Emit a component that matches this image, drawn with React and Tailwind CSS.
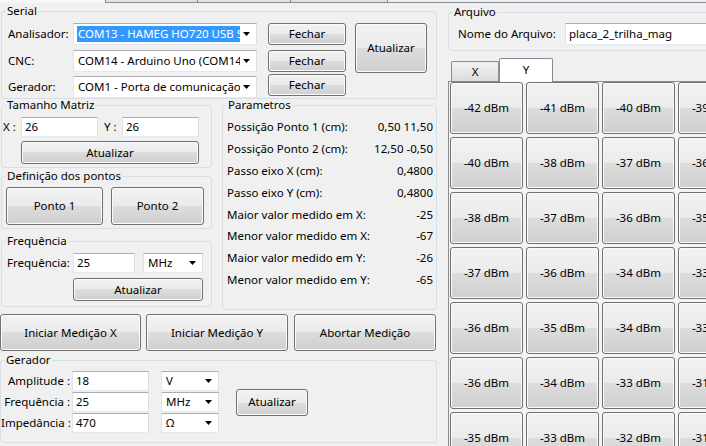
import React from 'react';

const btn =
  'flex items-center justify-center rounded-[3px] border border-[#707070] bg-[linear-gradient(to_bottom,#f2f2f2_0%,#ebebeb_50%,#dddddd_50%,#cfcfcf_100%)] shadow-[inset_0_0_0_1px_#fbfbfb] text-black';

const field =
  'flex items-center bg-white border border-[#abadb3] border-l-[#e2e3ea] border-r-[#dbdfe6] border-b-[#e3e9ef] pl-[3px] overflow-hidden whitespace-nowrap';

const Arrow = () => (
  <svg width="7" height="4" viewBox="0 0 7 4" className="shrink-0">
    <polygon points="0,0 7,0 3.5,4" fill="#000" />
  </svg>
);

const Group = ({ title, className = '', children }) => (
  <fieldset className={`min-w-0 rounded-[3px] border border-[#d5dfe5] ${className}`}>
    <legend className="ml-[4px] px-[1px] leading-[16px]">{title}</legend>
    {children}
  </fieldset>
);

const Combo = ({ text, className = '', selected = false }) => (
  <div className={`${field} pl-[2px] pr-[6px] ${className}`}>
    <div
      className={`flex-1 min-w-0 overflow-hidden whitespace-nowrap pl-[1px] ${
        selected ? 'bg-[#3399ff] text-white' : ''
      }`}
    >
      {text}
    </div>
    <div className="pl-[3px]">
      <Arrow />
    </div>
  </div>
);

const params = [
  ['Possição Ponto 1 (cm):', '0,50 11,50'],
  ['Possição Ponto 2 (cm):', '12,50 -0,50'],
  ['Passo eixo X (cm):', '0,4800'],
  ['Passo eixo Y (cm):', '0,4800'],
  ['Maior valor medido em X:', '-25'],
  ['Menor valor medido em X:', '-67'],
  ['Maior valor medido em Y:', '-26'],
  ['Menor valor medido em Y:', '-65'],
];

const grid = [
  [-42, -41, -40, -39],
  [-40, -38, -37, -36],
  [-38, -37, -36, -35],
  [-37, -36, -34, -33],
  [-36, -35, -34, -33],
  [-36, -34, -33, -31],
  [-35, -33, -32, -31],
];

export default function App() {
  return (
    <div className="w-[706px] h-[446px] overflow-hidden bg-[#f0f0f0] text-[11.5px] leading-[16px] text-black font-['Segoe_UI','Noto_Sans',sans-serif]">
      {/* bottom of parent tab bar */}
      <div className="flex h-[3px]">
        <div className="w-[105px] bg-[#f7f7f7]" />
        <div className="w-[93px] border-x border-b border-[#898c95] bg-[#e1e1e1]" />
        <div className="w-[93px] border-r border-b border-[#898c95] bg-[#e1e1e1]" />
        <div className="w-[97px] border-r border-b border-[#898c95] bg-[#e1e1e1]" />
        <div className="flex-1 border-b border-[#898c95]" />
      </div>

      <div className="flex">
        {/* left side */}
        <div className="w-[440px] shrink-0 pl-[1px] pr-[3px]">
          <Group title="Serial" className="h-[96px]">
            <div className="flex pt-[4px] pl-[6px]">
              <div className="flex flex-col">
                <div className="flex h-[22px] items-center">
                  <span className="w-[65px]">Analisador:</span>
                  <Combo text="COM13 - HAMEG HO720 USB Serial Port" selected className="w-[184px] h-[22px]" />
                </div>
                <div className="flex h-[22px] items-center mt-[5px]">
                  <span className="w-[65px]">CNC:</span>
                  <Combo text="COM14 - Arduino Uno (COM14)" className="w-[184px] h-[22px]" />
                </div>
                <div className="flex h-[22px] items-center mt-[4px]">
                  <span className="w-[65px]">Gerador:</span>
                  <Combo text="COM1 - Porta de comunicação" className="w-[184px] h-[22px]" />
                </div>
              </div>
              <div className="flex flex-col ml-[11px]">
                <button className={`${btn} w-[78px] h-[22px]`}>Fechar</button>
                <button className={`${btn} w-[78px] h-[22px] mt-[5px]`}>Fechar</button>
                <button className={`${btn} w-[78px] h-[22px] mt-[2px]`}>Fechar</button>
              </div>
              <button className={`${btn} ml-[9px] w-[72px] h-[50px]`}>Atualizar</button>
            </div>
          </Group>

          <div className="flex -mt-[2px]">
            <div className="w-[211px] shrink-0">
              <Group title="Tamanho Matriz" className="h-[71px]">
                <div className="pt-[4px] pl-[1px]">
                  <div className="flex items-center">
                    <span className="w-[18px]">X :</span>
                    <div className={`${field} w-[77px] h-[20px]`}>26</div>
                    <span className="w-[18px] ml-[6px]">Y :</span>
                    <div className={`${field} w-[77px] h-[20px]`}>26</div>
                  </div>
                  <button className={`${btn} mt-[4px] ml-[18px] w-[178px] h-[23px]`}>Atualizar</button>
                </div>
              </Group>

              <Group title="Definição dos pontos" className="h-[61px]">
                <div className="flex pt-[3px] pl-[4px]">
                  <button className={`${btn} w-[97px] h-[38px]`}>Ponto 1</button>
                  <button className={`${btn} ml-[8px] w-[93px] h-[38px]`}>Ponto 2</button>
                </div>
              </Group>

              <Group title="Frequência" className="h-[74px] mt-[4px]">
                <div className="pt-[4px] pl-[5px]">
                  <div className="flex items-center">
                    <span className="w-[66px]">Frequência:</span>
                    <div className={`${field} w-[62px] h-[20px]`}>25</div>
                    <Combo text="MHz" className="ml-[8px] w-[60px] h-[20px]" />
                  </div>
                  <button className={`${btn} mt-[5px] ml-[66px] w-[130px] h-[23px]`}>Atualizar</button>
                </div>
              </Group>
            </div>

            <Group title="Parametros" className="ml-[10px] w-[215px] h-[213px]">
              <div className="flex flex-col pt-[3px] pl-[4px] pr-[3px]">
                {params.map(([label, value]) => (
                  <div key={label} className="flex h-[21.9px] items-center justify-between whitespace-nowrap">
                    <span>{label}</span>
                    <span>{value}</span>
                  </div>
                ))}
              </div>
            </Group>
          </div>

          <div className="flex mt-[4px] -ml-[1px]">
            <button className={`${btn} w-[141px] h-[37px]`}>Iniciar Medição X</button>
            <button className={`${btn} ml-[5px] w-[142px] h-[37px]`}>Iniciar Medição Y</button>
            <button className={`${btn} ml-[6px] w-[142px] h-[37px]`}>Abortar Medição</button>
          </div>

          <Group title="Gerador" className="mt-[1px] -ml-[1px] w-[437px] h-[91px]">
            <div className="flex items-center pt-[3px]">
              <div className="flex flex-col gap-[1px]">
                {[
                  ['Amplitude :', '18', 'V'],
                  ['Frequência :', '25', 'MHz'],
                  ['Impedância :', '470', 'Ω'],
                ].map(([label, value, unit]) => (
                  <div key={label} className="flex items-center h-[20px]">
                    <span className="w-[71px] pr-[2px] text-right whitespace-nowrap">{label}</span>
                    <div className={`${field} w-[77px] h-[20px]`}>{value}</div>
                    <Combo text={unit} className="ml-[12px] w-[58px] h-[20px]" />
                  </div>
                ))}
              </div>
              <button className={`${btn} ml-[17px] w-[72px] h-[27px]`}>Atualizar</button>
            </div>
          </Group>
        </div>

        {/* right side */}
        <div className="ml-[8px] flex-1 min-w-0">
          <Group title="Arquivo" className="mt-[1px] w-[270px] h-[47px]">
            <div className="flex items-center pt-[3px] pl-[9px]">
              <span className="w-[107px] whitespace-nowrap">Nome do Arquivo:</span>
              <div className={`${field} flex-1 h-[22px]`}>placa_2_trilha_mag</div>
            </div>
          </Group>

          <div className="mt-[7px] flex items-end h-[23px] pl-[3px]">
            <div className="w-[48px] h-[20px] flex items-center justify-center border border-b-0 border-[#898c95] rounded-t-[2px] bg-[linear-gradient(to_bottom,#f2f2f2,#dcdcdc)]">
              X
            </div>
            <div className="relative z-10 -mb-[1px] w-[54px] h-[24px] flex items-center justify-center border border-b-0 border-[#898c95] rounded-t-[2px] bg-white pb-[2px]">
              Y
            </div>
          </div>
          <div className="border-t border-l border-[#898c95] bg-[#f4f4f4] pl-[1px] h-[400px]">
            <div className="grid grid-cols-[repeat(4,73px)] gap-[3px]">
              {grid.flat().map((v, i) => (
                <button key={i} className={`${btn} h-[52px] whitespace-nowrap`}>
                  {v} dBm
                </button>
              ))}
            </div>
          </div>
        </div>
      </div>
    </div>
  );
}
